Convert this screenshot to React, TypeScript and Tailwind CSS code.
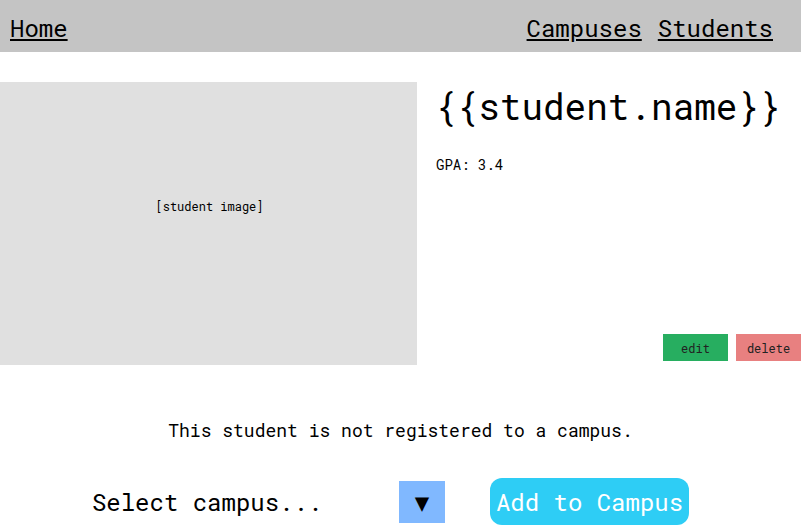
const mono = { fontFamily: '"Roboto Mono", "DejaVu Sans Mono", "Liberation Mono", monospace' };

export default function App() {
  return (
    <div className="w-[801px] h-[526px] overflow-hidden bg-white text-black" style={mono}>
      {/* nav */}
      <div className="h-[52px] bg-[#c4c4c4] flex items-center justify-between pt-[4px] pl-[10px] pr-[28px]">
        <a href="#" className="text-[24px] underline">Home</a>
        <div className="flex gap-4">
          <a href="#" className="text-[24px] underline">Campuses</a>
          <a href="#" className="text-[24px] underline">Students</a>
        </div>
      </div>

      {/* student info */}
      <div className="mt-[30px] flex">
        <div className="w-[417px] h-[283px] bg-[#e0e0e0] pt-[115px] pl-[2px] text-center text-[12px]">
          [student image]
        </div>
        <div className="flex-1 flex flex-col">
          <h1 className="text-[36px] leading-[48px] ml-[18px]">{'{{student.name}}'}</h1>
          <p className="text-[14px] ml-[19px] mt-[24px]">GPA: 3.4</p>
          <div className="mt-auto mb-[4px] flex justify-end gap-2">
            <button className="w-[65px] h-[27px] bg-[#27ae60] text-[12px] text-[#222]">edit</button>
            <button className="w-[65px] h-[27px] bg-[#e88080] text-[12px] text-[#222]">delete</button>
          </div>
        </div>
      </div>

      {/* campus */}
      <p className="mt-[52px] text-center text-[18px]">This student is not registered to a campus.</p>
      <div className="mt-[34px] flex items-center justify-center">
        <span className="text-[24px] w-[307px] ml-[-20px]">Select campus...</span>
        <div className="w-[46px] h-[42px] bg-[#80b8ff] flex items-center justify-center text-[24px]">▼</div>
        <button className="ml-[45px] h-[47px] px-[6px] rounded-[12px] bg-[#2ecdf5] text-white text-[24px]">Add to Campus</button>
      </div>
    </div>
  );
}
